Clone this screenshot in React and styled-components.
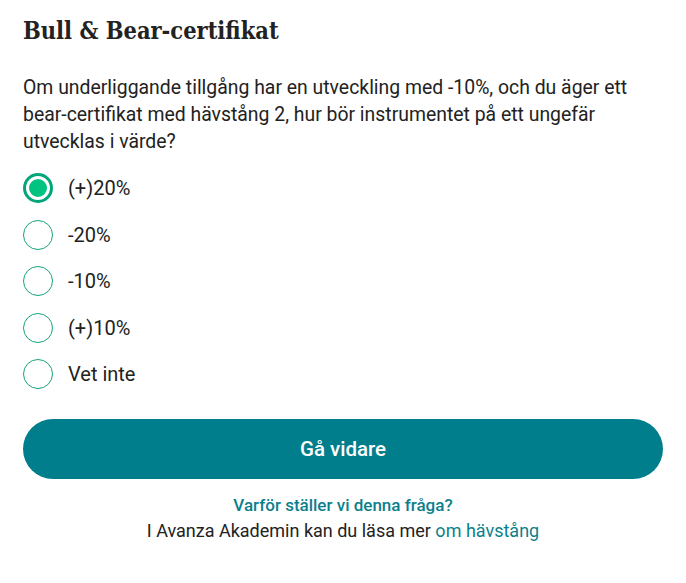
import React, { useState } from 'react';
import styled, { createGlobalStyle } from 'styled-components';

const GlobalStyle = createGlobalStyle`
  body {
    margin: 0;
    background: #fff;
    font-family: Roboto, "Liberation Sans", sans-serif;
    color: #222;
  }
`;

const Page = styled.div`
  padding: 14px 23px 0 23px;
  width: 640px;
`;

const Title = styled.h2`
  margin: 0;
  font-family: "DejaVu Serif Condensed", "DejaVu Serif", serif;
  font-stretch: condensed;
  font-weight: bold;
  font-size: 23.4px;
  line-height: 34px;
  color: #222;
`;

const Question = styled.p`
  margin: 26px 0 10px 0;
  font-size: 19.4px;
  line-height: 27px;
  color: #222;
`;

const Options = styled.div`
  display: flex;
  flex-direction: column;
`;

const Option = styled.label`
  display: flex;
  align-items: center;
  gap: 15px;
  height: 46.5px;
  font-size: 20px;
  color: #222;
  cursor: pointer;
`;

const Radio = styled.span`
  box-sizing: border-box;
  width: 30px;
  height: 30px;
  border-radius: 50%;
  border: ${(p) => (p.$checked ? '3px solid #00a679' : '1px solid #16a47d')};
  display: flex;
  align-items: center;
  justify-content: center;
  &::after {
    content: '';
    display: ${(p) => (p.$checked ? 'block' : 'none')};
    width: 18px;
    height: 18px;
    border-radius: 50%;
    background: #00c281;
  }
`;

const Button = styled.button`
  margin-top: 21px;
  width: 100%;
  height: 60px;
  border: none;
  border-radius: 30px;
  background: #007e8c;
  color: #fff;
  font-family: Roboto, sans-serif;
  font-weight: 500;
  font-size: 20.5px;
  cursor: pointer;
`;

const Footer = styled.div`
  margin-top: 13px;
  text-align: center;
  font-size: 18px;
  line-height: 25px;
`;

const Why = styled.a`
  color: #0d7f8c;
  text-decoration: none;
  font-weight: 500;
  font-size: 17px;
`;

const Link = styled.a`
  color: #0d7f8c;
  text-decoration: none;
`;

const options = ['(+)20%', '-20%', '-10%', '(+)10%', 'Vet inte'];

export default function App() {
  const [selected, setSelected] = useState(0);
  return (
    <>
      <GlobalStyle />
      <Page>
        <Title>Bull &amp; Bear-certifikat</Title>
        <Question>
          Om underliggande tillgång har en utveckling med -10%, och du äger ett
          bear-certifikat med hävstång 2, hur bör instrumentet på ett ungefär
          utvecklas i värde?
        </Question>
        <Options>
          {options.map((o, i) => (
            <Option key={o} onClick={() => setSelected(i)}>
              <Radio $checked={selected === i} />
              {o}
            </Option>
          ))}
        </Options>
        <Button>Gå vidare</Button>
        <Footer>
          <Why href="#">Varför ställer vi denna fråga?</Why>
          <br />
          I Avanza Akademin kan du läsa mer <Link href="#">om hävstång</Link>
        </Footer>
      </Page>
    </>
  );
}
